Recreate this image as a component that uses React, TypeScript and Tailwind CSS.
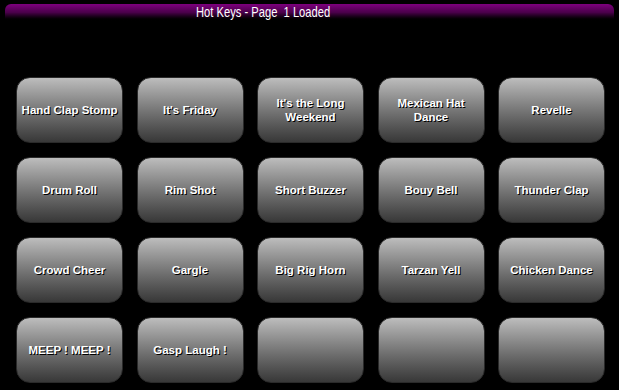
import React from "react";

const labels: string[] = [
  "Hand Clap Stomp",
  "It's Friday",
  "It's the Long Weekend",
  "Mexican Hat Dance",
  "Revelle",
  "Drum Roll",
  "Rim Shot",
  "Short Buzzer",
  "Bouy Bell",
  "Thunder Clap",
  "Crowd Cheer",
  "Gargle",
  "Big Rig Horn",
  "Tarzan Yell",
  "Chicken Dance",
  "MEEP ! MEEP !",
  "Gasp Laugh !",
  "",
  "",
  "",
];

export default function App() {
  return (
    <div
      className="w-[619px] h-[390px] bg-black overflow-hidden"
      style={{ fontFamily: '"Liberation Sans", Arial, sans-serif' }}
    >
      <div className="pt-[4px] px-[5px]">
        <div className="h-[17px] rounded-t-[6px] bg-gradient-to-b from-[#7e007e] via-[#4a004a] to-black flex items-center justify-start pl-[191px] text-white text-[15px] leading-none whitespace-pre">
          <span className="inline-block origin-left scale-x-[0.745] -translate-y-[1px]">{"Hot Keys - Page  1 Loaded"}</span>
        </div>
      </div>
      <div className="grid grid-cols-[repeat(5,107px)] grid-rows-[repeat(4,66px)] gap-x-[13.5px] gap-y-[14px] pl-[16px] pt-[56px]">
        {labels.map((l, i) => (
          <div
            key={i}
            className="rounded-[14px] bg-gradient-to-b from-[#bdbdbd] to-[#383838] border border-[#2a2a2a] flex items-center justify-center text-center px-[1px] text-white font-bold text-[11.5px] leading-[14px] [text-shadow:1px_1px_0_#000]"
          >
            {l}
          </div>
        ))}
      </div>
    </div>
  );
}
